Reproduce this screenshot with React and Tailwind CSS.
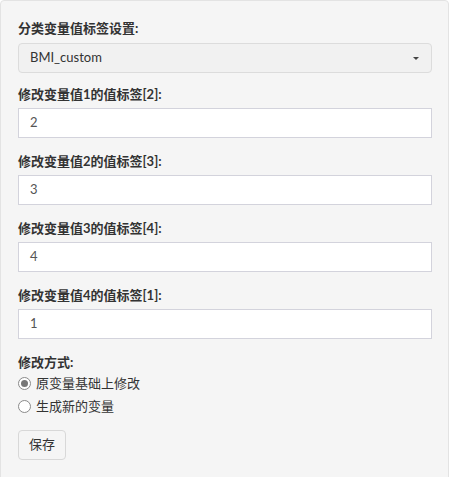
import React from "react";

const font = { fontFamily: '"Lato", "Noto Sans CJK SC", sans-serif' };

function Field({ label, value }) {
  return (
    <div className="mb-[15px]">
      <div className="text-[13px] font-bold leading-[17px] mb-[5px] text-[#333]">{label}</div>
      <div className="h-[30px] bg-white border border-[#d3d3dc] flex items-center pl-[11px] text-[13px] text-[#555]">
        {value}
      </div>
    </div>
  );
}

function Radio({ checked, label }) {
  return (
    <div className="flex items-center h-[23px]">
      <span className="w-[13px] h-[13px] rounded-full border border-[#8a8a8a] bg-white flex items-center justify-center">
        {checked && <span className="w-[7px] h-[7px] rounded-full bg-[#777]" />}
      </span>
      <span className="ml-[5px] text-[13px] text-[#333]">{label}</span>
    </div>
  );
}

export default function App() {
  return (
    <div className="w-[451px] h-[477px] bg-white overflow-hidden" style={font}>
      <div className="w-[449px] h-[490px] bg-[#f5f5f5] border border-[#e3e3e3] rounded-[4px] pl-[17px] pr-[16px] pt-[19px]">
        <div className="mb-[13px]">
          <div className="text-[13px] font-bold leading-[17px] mb-[6px] text-[#333]">分类变量值标签设置:</div>
          <div className="h-[30px] bg-[#f1f1f1] border border-[#dcdcdc] rounded-[4px] flex items-center justify-between pl-[11px] pr-[12px] text-[13px] text-[#333]">
            <span>BMI_custom</span>
            <span className="w-0 h-0 border-l-[3px] border-r-[3px] border-t-[3px] border-l-transparent border-r-transparent border-t-[#444]" />
          </div>
        </div>
        <Field label="修改变量值1的值标签[2]:" value="2" />
        <Field label="修改变量值2的值标签[3]:" value="3" />
        <Field label="修改变量值3的值标签[4]:" value="4" />
        <Field label="修改变量值4的值标签[1]:" value="1" />
        <div className="text-[13px] font-bold leading-[17px] text-[#333]">修改方式:</div>
        <div className="mt-[1px]">
          <Radio checked label="原变量基础上修改" />
          <Radio label="生成新的变量" />
        </div>
        <button className="mt-[12px] h-[30px] w-[48px] bg-[#f5f5f5] border border-[#d8d8d8] rounded-[4px] text-[13px] text-[#333] flex items-center justify-center">
          保存
        </button>
      </div>
    </div>
  );
}
